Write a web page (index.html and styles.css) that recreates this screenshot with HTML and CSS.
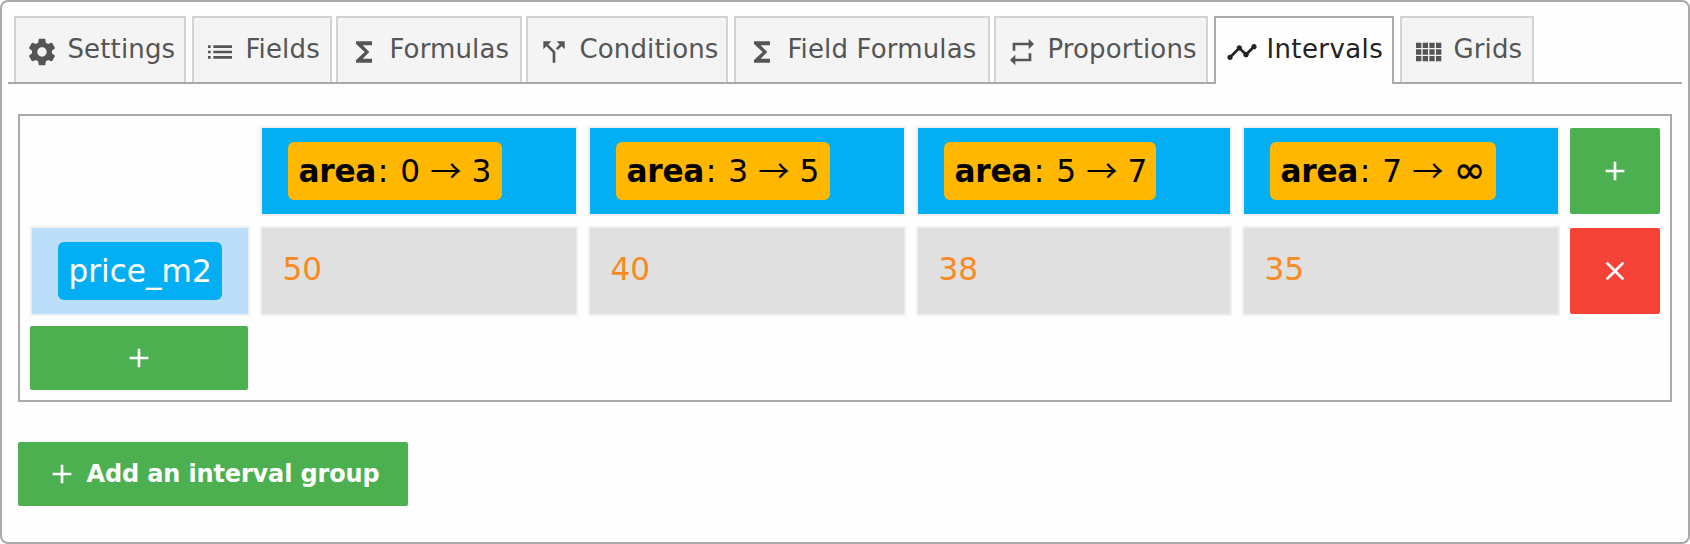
FILE: index.html
```html
<!DOCTYPE html>
<html lang="en">
<head>
<meta charset="utf-8">
<title>Intervals</title>
<link rel="stylesheet" href="styles.css">
</head>
<body>
<main class="card">
  <nav class="tabs">
    <a class="tab tab-settings"><svg class="icon" viewBox="0 0 24 24"><path d="M19.43 12.98c.04-.32.07-.64.07-.98s-.03-.66-.07-.98l2.11-1.65c.19-.15.24-.42.12-.64l-2-3.46c-.12-.22-.39-.3-.61-.22l-2.49 1c-.52-.4-1.08-.73-1.69-.98l-.38-2.65C14.46 2.18 14.25 2 14 2h-4c-.25 0-.46.18-.49.42l-.38 2.65c-.61.25-1.17.59-1.69.98l-2.49-1c-.23-.09-.49 0-.61.22l-2 3.46c-.13.22-.07.49.12.64l2.11 1.65c-.04.32-.07.65-.07.98s.03.66.07.98l-2.11 1.65c-.19.15-.24.42-.12.64l2 3.46c.12.22.39.3.61.22l2.49-1c.52.4 1.08.73 1.69.98l.38 2.65c.03.24.24.42.49.42h4c.25 0 .46-.18.49-.42l.38-2.65c.61-.25 1.17-.59 1.69-.98l2.49 1c.23.09.49 0 .61-.22l2-3.46c.12-.22.07-.49-.12-.64l-2.11-1.65zM12 15.5c-1.93 0-3.5-1.57-3.5-3.5s1.57-3.5 3.5-3.5 3.5 1.57 3.5 3.5-1.57 3.5-3.5 3.5z"/></svg><span>Settings</span></a>
    <a class="tab tab-fields"><svg class="icon" viewBox="0 0 24 24"><path d="M3 13h2v-2H3v2zm0 4h2v-2H3v2zm0-8h2V7H3v2zm4 4h14v-2H7v2zm0 4h14v-2H7v2zM7 7v2h14V7H7z"/></svg><span>Fields</span></a>
    <a class="tab tab-formulas"><svg class="icon" viewBox="0 0 24 24"><path d="M18 4H6v2l6.5 6L6 18v2h12v-3h-7l5-5-5-5h7z"/></svg><span>Formulas</span></a>
    <a class="tab tab-conditions"><svg class="icon" viewBox="0 0 24 24"><path d="M14 4l2.29 2.29-2.88 2.88 1.42 1.42 2.88-2.88L20 10V4zm-4 0H4v6l2.29-2.29 4.71 4.7V20h2v-8.41l-5.29-5.3z"/></svg><span>Conditions</span></a>
    <a class="tab tab-field-formulas"><svg class="icon" viewBox="0 0 24 24"><path d="M18 4H6v2l6.5 6L6 18v2h12v-3h-7l5-5-5-5h7z"/></svg><span>Field Formulas</span></a>
    <a class="tab tab-proportions"><svg class="icon" viewBox="0 0 24 24"><path d="M7 7h10v3l4-4-4-4v3H5v6h2V7zm10 10H7v-3l-4 4 4 4v-3h12v-6h-2v4z"/></svg><span>Proportions</span></a>
    <a class="tab tab-intervals active"><svg class="icon" viewBox="0 0 24 24"><path d="M23 8c0 1.1-.9 2-2 2-.18 0-.35-.02-.51-.07l-3.56 3.55c.05.16.07.34.07.52 0 1.1-.9 2-2 2s-2-.9-2-2c0-.18.02-.36.07-.52l-2.55-2.55c-.16.05-.34.07-.52.07s-.36-.02-.52-.07l-4.55 4.56c.05.16.07.33.07.51 0 1.1-.9 2-2 2s-2-.9-2-2 .9-2 2-2c.18 0 .35.02.51.07l4.56-4.55C8.02 9.36 8 9.18 8 9c0-1.1.9-2 2-2s2 .9 2 2c0 .18-.02.36-.07.52l2.55 2.55c.16-.05.34-.07.52-.07s.36.02.52.07l3.55-3.56C19.02 8.35 19 8.18 19 8c0-1.1.9-2 2-2s2 .9 2 2z"/></svg><span>Intervals</span></a>
    <a class="tab tab-grids"><svg class="icon" viewBox="0 0 24 24"><path d="M3 9h4V5H3v4zm0 5h4v-4H3v4zm5 0h4v-4H8v4zm5 0h4v-4h-4v4zM8 9h4V5H8v4zm5-4v4h4V5h-4zm5 9h4v-4h-4v4zM3 19h4v-4H3v4zm5 0h4v-4H8v4zm5 0h4v-4h-4v4zm5 0h4v-4h-4v4zm0-14v4h4V5h-4z"/></svg><span>Grids</span></a>
  </nav>

  <section class="group">
    <div></div>
    <div class="cell head"><span class="chip range w214"><b>area</b><span class="colon">:</span> 0 <i class="arrow">→</i> 3</span></div>
    <div class="cell head"><span class="chip range w214"><b>area</b><span class="colon">:</span> 3 <i class="arrow">→</i> 5</span></div>
    <div class="cell head"><span class="chip range w212"><b>area</b><span class="colon">:</span> 5 <i class="arrow">→</i> 7</span></div>
    <div class="cell head"><span class="chip range w226"><b>area</b><span class="colon">:</span> 7 <i class="arrow">→</i> <i class="infinity">∞</i></span></div>
    <button class="btn square"><svg class="icon" viewBox="0 0 24 24"><path d="M19 13h-6v6h-2v-6H5v-2h6V5h2v6h6v2z"/></svg></button>

    <div class="cell label"><span class="chip field">price_m2</span></div>
    <div class="cell value">50</div>
    <div class="cell value">40</div>
    <div class="cell value">38</div>
    <div class="cell value">35</div>
    <button class="btn square danger"><svg class="icon" viewBox="0 0 24 24"><path d="M19 6.41L17.59 5 12 10.59 6.41 5 5 6.41 10.59 12 5 17.59 6.41 19 12 13.41 17.59 19 19 17.59 13.41 12z"/></svg></button>

    <button class="btn add-row"><svg class="icon" viewBox="0 0 24 24"><path d="M19 13h-6v6h-2v-6H5v-2h6V5h2v6h6v2z"/></svg></button>
  </section>

  <button class="btn add-group"><svg class="icon" viewBox="0 0 24 24"><path d="M19 13h-6v6h-2v-6H5v-2h6V5h2v6h6v2z"/></svg><span>Add an interval group</span></button>
</main>
</body>
</html>
```
FILE: styles.css
```css
* { box-sizing: border-box; }

body {
  margin: 0;
  background: #fff;
  font-family: Verdana, "DejaVu Sans", sans-serif;
}

.card {
  width: 1690px;
  height: 544px;
  padding: 14px 6px 0;
  border: 2px solid #a9a9a9;
  border-radius: 8px;
  background: #fefefe;
}

.icon {
  width: 32px;
  height: 32px;
  flex: none;
  fill: currentColor;
}

.tabs {
  display: flex;
  height: 68px;
  padding-left: 6px;
  border-bottom: 2px solid #a9a9a9;
}

.tab {
  display: flex;
  gap: 9px;
  height: 66px;
  margin-right: 6px;
  padding: 18px 0 0 10.4px;
  border: 2px solid #d3d3d3;
  border-bottom: 0;
  background: #f4f4f4;
  color: #555;
  font-size: 26px;
  line-height: 30px;
  letter-spacing: 0.15px;
  white-space: nowrap;
}

.tab span { margin-top: -2px; }

.tab.active {
  gap: 8.4px;
  height: 68px;
  padding-left: 10px;
  border-color: #a9a9a9;
  background: #fefefe;
  color: #222;
  letter-spacing: 0.4px;
}

.tab-settings { width: 172px; }
.tab-fields { width: 140px; margin-right: 4px; }
.tab-formulas { width: 186px; margin-right: 4px; }
.tab-conditions { width: 202px; }
.tab-field-formulas { width: 256px; margin-right: 4px; }
.tab-proportions { width: 214px; }
.tab-intervals { width: 180px; }
.tab-grids { width: 134px; }

.group {
  display: grid;
  grid-template-columns: 220px 318px 318px 316px 318px 90px;
  grid-template-rows: 90px 90px 64px;
  gap: 10px;
  margin: 30px 10px 0;
  padding: 10px;
  border: 2px solid #a9a9a9;
}

.cell {
  border: 2px solid #f0f0f0;
  font-size: 31.2px;
}

.head, .label { padding: 14px 26px; }
.head { background: #03aef2; }
.label { background: #bbdefb; }

.value {
  padding: 21px 20.4px;
  background: #e0e0e0;
  color: #f78a20;
  line-height: 40px;
}

.chip {
  display: block;
  height: 58px;
  padding: 9px 0 9px 10.4px;
  border-radius: 6px;
  line-height: 40px;
  white-space: nowrap;
}

.range { background: #ffb700; color: #000; word-spacing: 0.3px; }
.range b { letter-spacing: -0.2px; }
.colon { margin: 0 1.6px; }
.field { width: 164px; background: #03aef2; color: #fff; }
.w214 { width: 214px; }
.w212 { width: 212px; }
.w226 { width: 226px; }

.arrow {
  font-family: "Noto Sans CJK JP", sans-serif;
  font-style: normal;
  line-height: 1;
}

.infinity {
  font-size: 38px;
  font-style: normal;
  line-height: 0;
  vertical-align: -1px;
  -webkit-text-stroke: 0.5px currentColor;
}

.btn {
  display: flex;
  align-items: center;
  justify-content: center;
  padding: 0;
  border: 0;
  border-radius: 2px;
  background: #4caf50;
  color: #fff;
  font: bold 24px/30px Verdana, "DejaVu Sans", sans-serif;
}

.square { height: 86px; margin-top: 2px; }
.danger { background: #f44336; }
.add-row { width: 218px; }

.add-group {
  gap: 8px;
  width: 390px;
  height: 64px;
  margin: 40px 0 0 10px;
  letter-spacing: -0.14px;
  white-space: nowrap;
}
```
